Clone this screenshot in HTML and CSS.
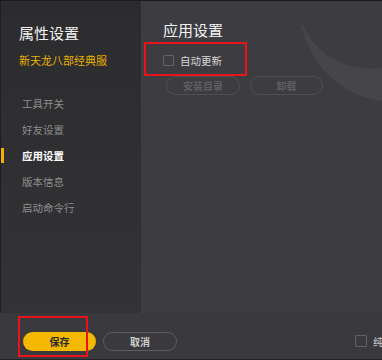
FILE: index.html
```html
<!DOCTYPE html>
<html lang="zh-CN">
<head>
  <meta charset="UTF-8">
  <title>属性设置</title>
  <link rel="stylesheet" href="styles.css">
</head>
<body>

  <div class="window">
    <div class="content">

      <!-- left menu -->
      <div class="sidebar">
        <h1 class="side-title">属性设置</h1>
        <p class="server-name">新天龙八部经典服</p>
        <ul class="nav">
          <li>工具开关</li>
          <li>好友设置</li>
          <li class="active">应用设置</li>
          <li>版本信息</li>
          <li>启动命令行</li>
        </ul>
      </div>

      <!-- settings panel -->
      <div class="main">
        <svg class="swoosh" width="90" height="100" viewBox="0 0 90 100">
          <path d="M9 9 C17 45 44 80 90 86 L90 53 C54 57 24 40 12 11 Z" fill="#46454a"/>
        </svg>
        <h2 class="main-title">应用设置</h2>
        <label class="check-row">
          <span class="checkbox"></span>
          <span>自动更新</span>
        </label>
        <div class="btn-row">
          <button class="ghost-btn disabled">安装目录</button>
          <button class="ghost-btn disabled narrow">卸载</button>
        </div>
        <div class="mark mark-update"></div>
      </div>
    </div>

    <!-- bottom bar -->
    <div class="footer">
      <button class="save-btn">保存</button>
      <button class="ghost-btn cancel">取消</button>
      <label class="check-row pure">
        <span class="checkbox"></span>
        <span>纯净模式</span>
      </label>
      <div class="mark mark-save"></div>
    </div>
  </div>

</body>
</html>
```

FILE: styles.css
```css
body {
  margin: 0;
  background: #3d3c41;
  font-family: "Noto Sans CJK SC", "Noto Sans", sans-serif;
  overflow: hidden;
}

.window {
  position: relative;
  width: 382px;
  height: 360px;
  overflow: hidden;
  border-top: 1px solid #1b1b1d;
  box-sizing: border-box;
  display: flex;
  flex-direction: column;
}

.content {
  display: flex;
  height: 312px;
}

.sidebar {
  width: 141px;
  box-sizing: border-box;
  border-left: 1px solid #1f1f21;
  padding-top: 22px;
  background: linear-gradient(#2c2c2e, #333336);
}

.side-title {
  margin: 0 0 9px 18px;
  font-size: 15px;
  line-height: 20px;
  font-weight: normal;
  color: #f2f2f2;
}

.server-name {
  margin: 0 0 23px 18px;
  font-size: 11px;
  line-height: 16px;
  color: #e8b100;
}

.nav {
  list-style: none;
  margin: 0;
  padding: 0;
}

.nav li {
  position: relative;
  padding-left: 21px;
  font-size: 10.5px;
  line-height: 26px;
  height: 26px;
  color: #8e8e8e;
}

.nav li.active {
  color: #ffffff;
  font-weight: bold;
}

.nav li.active::before {
  content: "";
  position: absolute;
  left: 0;
  top: 5px;
  width: 3px;
  height: 15px;
  background: #f2b000;
}

.main {
  position: relative;
  flex: 1;
  padding: 19px 0 0 22px;
  background: #3d3c41;
}

.swoosh {
  position: absolute;
  right: 0;
  top: 14px;
}

.main-title {
  position: relative;
  margin: 0 0 10px;
  font-size: 15px;
  line-height: 20px;
  font-weight: normal;
  color: #f2f2f2;
}

.check-row {
  position: relative;
  display: flex;
  align-items: center;
  height: 20px;
  font-size: 10.5px;
  color: #d6d6d6;
}

.checkbox {
  width: 9px;
  height: 9px;
  border: 1px solid #626166;
  border-radius: 1px;
  margin-right: 6px;
}

.btn-row {
  position: relative;
  display: flex;
  gap: 10px;
  margin: 6px 0 0 3px;
}

.ghost-btn {
  flex-shrink: 0;
  width: 74px;
  height: 19px;
  padding: 0;
  border: 1px solid #5e5d62;
  border-radius: 10px;
  background: transparent;
  font-family: inherit;
  font-size: 10px;
  font-weight: bold;
  color: #cfcfcf;
}

.ghost-btn.disabled {
  border-color: #4f4e53;
  color: #5f5e63;
}

.ghost-btn.narrow {
  width: 73px;
}

.footer {
  position: relative;
  display: flex;
  align-items: flex-start;
  height: 47px;
  box-sizing: border-box;
  padding: 19px 0 0 23px;
  background: #3a393e;
  border-bottom: 1px solid #232325;
}

.save-btn {
  flex-shrink: 0;
  width: 73px;
  height: 19px;
  padding: 0;
  border: none;
  border-radius: 10px;
  background: #f5b800;
  font-family: inherit;
  font-size: 10px;
  font-weight: bold;
  color: #2b2b2b;
}

.cancel {
  margin-left: 7px;
}

.pure {
  margin: -1px 0 0 178px;
  white-space: nowrap;
  flex-shrink: 0;
  color: #cfcfcf;
}

.pure .checkbox {
  width: 10px;
  height: 10px;
  margin-right: 6px;
}

/* red highlight boxes */
.mark {
  position: absolute;
  border: 2px solid #e8141b;
  box-sizing: border-box;
}

.mark-update {
  left: 3px;
  top: 41px;
  width: 103px;
  height: 34px;
}

.mark-save {
  left: 18px;
  top: 3px;
  width: 70px;
  height: 41px;
}
```
